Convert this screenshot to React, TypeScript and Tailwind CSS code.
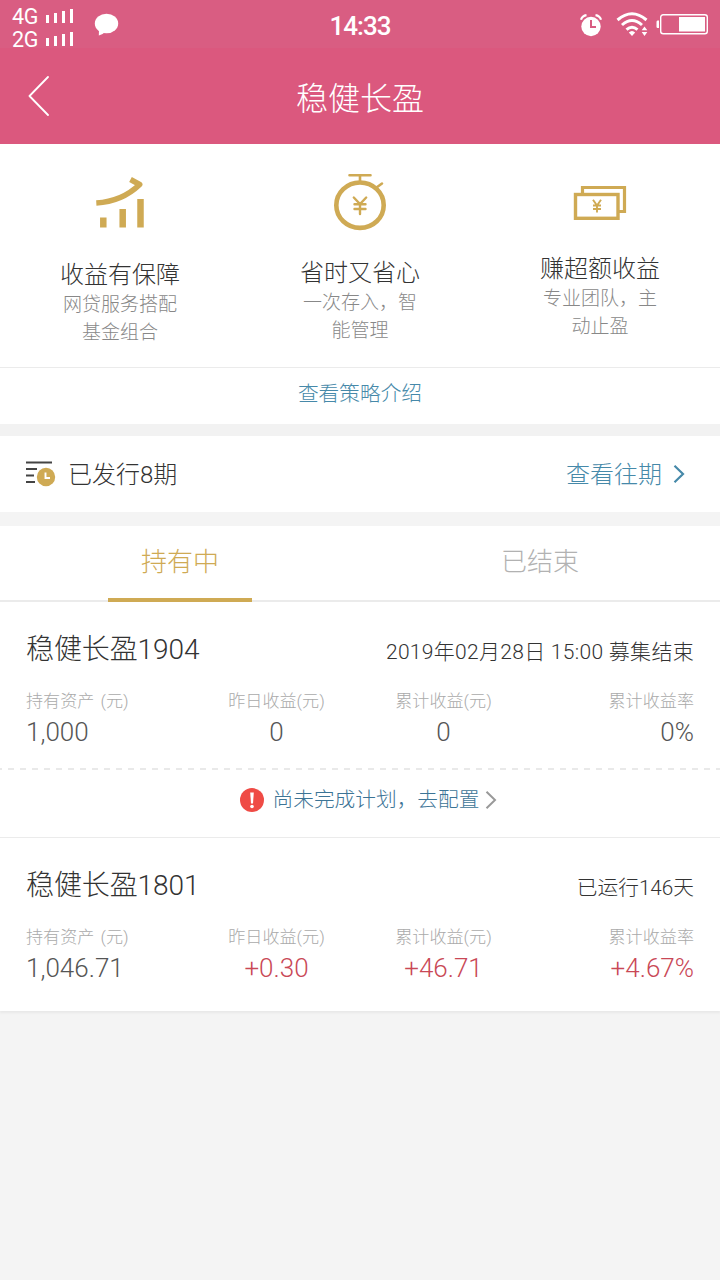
import type { ReactNode } from "react";

const GOLD = "#cfaa54";

interface Stat {
  label: string;
  value: string;
  up?: boolean;
}

const plan1904: Stat[] = [
  { label: "持有资产 (元)", value: "1,000" },
  { label: "昨日收益(元)", value: "0" },
  { label: "累计收益(元)", value: "0" },
  { label: "累计收益率", value: "0%" },
];

const plan1801: Stat[] = [
  { label: "持有资产 (元)", value: "1,046.71" },
  { label: "昨日收益(元)", value: "+0.30", up: true },
  { label: "累计收益(元)", value: "+46.71", up: true },
  { label: "累计收益率", value: "+4.67%", up: true },
];

const statAlign = ["text-left", "text-center", "text-center", "text-right"];

function Signal({ name }: { name: string }) {
  return (
    <div className="flex h-[23px] items-center">
      <span className="w-[34px] pt-px text-[21.5px] leading-[23px] tracking-[-0.4px]">{name}</span>
      <svg width="28" height="14" viewBox="0 0 28 14" fill="#fff">
        <rect x="0" y="6" width="3" height="8" />
        <rect x="8" y="4" width="3" height="10" />
        <rect x="16" y="2" width="3" height="12" />
        <rect x="24" y="0" width="3" height="14" />
      </svg>
    </div>
  );
}

function StatusBar() {
  return (
    <div className="grid h-12 grid-cols-3 items-start bg-[#d95d82] text-white">
      <div className="flex items-start pl-3">
        <div className="flex flex-col pt-1">
          <Signal name="4G" />
          <Signal name="2G" />
        </div>
        <svg className="ml-5 mt-[13px]" width="25" height="24" viewBox="0 0 25 24" fill="#fff">
          <ellipse cx="12.5" cy="10.500" rx="11.7" ry="9.8" />
          <path d="M5 16.500 L4.800 22.500 Q9 21.500 11.500 18.500 Z" />
        </svg>
      </div>
      <div className="pt-1.5 text-center text-[26px] font-medium leading-10 tracking-[-1px]">14:33</div>
      <div className="flex items-center justify-end pr-3 pt-3">
        <svg width="22" height="24" viewBox="0 0 22 24" fill="none">
          <circle cx="11" cy="13.500" r="9.700" fill="#fff" />
          <path d="M1 6.700 Q2.200 2.700 6.500 2.100 M15.500 2.100 Q19.800 2.700 21 6.700" stroke="#fff" strokeWidth="2.200" />
          <path d="M11 7 V14 H16" stroke="#d95d82" strokeWidth="2" />
        </svg>
        <svg className="ml-3.5" width="33" height="25" viewBox="0 0 33 25" fill="none" stroke="#fff" strokeWidth="3">
          <path d="M1.500 8 Q16 -4.500 30.500 8" />
          <path d="M6 13 Q16 4 26 13" />
          <path d="M10.500 17.600 Q16 13 21.500 17.600" />
          <path d="M12.800 20.500 Q16 17.500 19.200 20.500 L16 24 Z" fill="#fff" stroke="none" />
          <path d="M28.500 14.500 L31.300 18.300 H25.700 Z M28.500 24 L31.300 20 H25.700 Z" fill="#fff" stroke="none" />
        </svg>
        <svg className="ml-[7px]" width="52" height="21" viewBox="0 0 52 21" fill="none">
          <path d="M3 6.500 H1.500 Q0.500 6.500 0.500 8 V12.500 Q0.500 14 1.500 14 H3 Z" fill="#fff" />
          <rect x="4.700" y="0.700" width="46.600" height="19" rx="2.500" stroke="#fff" strokeWidth="1.400" />
          <rect x="23" y="3" width="26" height="14.500" fill="#fff" />
        </svg>
      </div>
    </div>
  );
}

function NavBar() {
  return (
    <div className="flex h-24 items-center bg-[#db587e] text-white">
      <div className="w-[120px] pl-7">
        <svg width="22" height="40" viewBox="0 0 22 40" fill="none" stroke="#fff" strokeWidth="1.800" strokeLinecap="round" strokeLinejoin="round">
          <path d="M20 1 L1.500 20 L20 39" />
        </svg>
      </div>
      <h1 className="flex-1 pt-[5px] text-center text-[32px] font-light leading-10">稳健长盈</h1>
      <div className="w-[120px]" />
    </div>
  );
}

function Feature({ icon, title, children, iconBox }: { icon: ReactNode; title: string; children: ReactNode; iconBox: string }) {
  return (
    <div className="flex flex-col items-center">
      <div className={iconBox}>{icon}</div>
      <h2 className="text-2xl font-light leading-8 text-[#333]">{title}</h2>
      <p className="w-[120px] text-center text-[19px] font-light leading-7 text-[#888]">{children}</p>
    </div>
  );
}

function GrowthIcon() {
  return (
    <svg width="60" height="64" viewBox="90 168 60 64" fill="none" stroke={GOLD}>
      <path d="M96.300 203 Q122 201.500 139.700 184.500 L130.500 179.500" strokeWidth="5.500" strokeLinejoin="round" />
      <path d="M103.300 217.500 V227.500 M122.700 209 V227.500 M140.500 199 V227.500" strokeWidth="6.500" />
    </svg>
  );
}

function TimerIcon() {
  return (
    <svg width="60" height="64" viewBox="330 168 60 64" fill="none" stroke={GOLD} strokeLinecap="round">
      <ellipse cx="360" cy="205.200" rx="23.700" ry="22.700" strokeWidth="4.600" />
      <path d="M349.500 175.200 H370.500 M360 175.500 V182 M376.500 187.500 L382 183.500" strokeWidth="2.600" />
      <path d="M353.800 197.500 L360 204 L366.200 197.500 M360 204 V214 M354.500 204.300 H365.500 M354.500 209 H365.500" strokeWidth="2.400" />
    </svg>
  );
}

function CashIcon() {
  return (
    <svg width="60" height="64" viewBox="570 168 60 64" fill="none" stroke={GOLD}>
      <path d="M582.500 193 V187.500 H624.500 V211.500 H619" strokeWidth="3.200" />
      <rect x="575.500" y="194.500" width="42.500" height="23.800" strokeWidth="3.400" />
      <path d="M593 199.800 L597 205.500 L601 199.800 M597 205 V212.500 M593 205.500 H601 M593 209 H601" strokeWidth="1.900" />
    </svg>
  );
}

function Chevron({ color, width }: { color: string; width: number }) {
  return (
    <svg width="12" height="20" viewBox="0 0 12 20" fill="none" stroke={color} strokeWidth={width}>
      <path d="M1.500 1.800 L10 10 L1.500 18.200" />
    </svg>
  );
}

function PlanCard({ name, note, noteClass, stats }: { name: string; note: string; noteClass: string; stats: Stat[] }) {
  return (
    <div className="px-[26px] pt-[27px]">
      <div className="flex h-10 items-center justify-between text-[#333]">
        <h3 className="pt-0.5 text-[28px] font-light leading-10 tracking-[-0.1px]">{name}</h3>
        <span className={`pt-[5px] font-light leading-9 ${noteClass}`}>{note}</span>
      </div>
      <div className="mt-[18px] grid grid-cols-4">
        {stats.map((s, i) => (
          <div key={s.label} className={statAlign[i]}>
            <div className="text-[17.1px] font-light leading-7 text-[#aaa] [word-spacing:2px]">{s.label}</div>
            <div className={`-mt-px text-[26px] font-light leading-9 ${s.up ? "text-[#c94856]" : "text-[#555]"}`}>{s.value}</div>
          </div>
        ))}
      </div>
    </div>
  );
}

export default function App() {
  return (
    <div className="min-h-screen w-[720px] bg-[#f4f4f4] font-[Roboto,'Noto_Sans_CJK_SC',sans-serif]">
      <StatusBar />
      <NavBar />

      <section className="bg-white">
        <div className="grid h-[223px] grid-cols-3 pt-6">
          <Feature icon={<GrowthIcon />} title="收益有保障" iconBox="h-[91px]">网贷服务搭配基金组合</Feature>
          <Feature icon={<TimerIcon />} title="省时又省心" iconBox="h-[89px]">一次存入，智能管理</Feature>
          <Feature icon={<CashIcon />} title="赚超额收益" iconBox="h-[85px]">专业团队，主动止盈</Feature>
        </div>
        <div className="h-[57px] border-t border-[#ebebeb] text-center text-[20.7px] font-light leading-[52px] text-[#4689a9]">
          查看策略介绍
        </div>
      </section>

      <section className="mt-3 flex h-[76px] items-center bg-white pl-[26px] pr-[35px] shadow-[0_-12px_0_#f2f2f2]">
        <svg width="30" height="28" viewBox="0 0 30 28" fill="none">
          <path d="M0 2.500 H26 M0 9 H11 M0 15.500 H8 M0 22 H9" stroke="#444" strokeWidth="1.800" />
          <circle cx="20" cy="17" r="9.200" fill={GOLD} />
          <path d="M19.500 12.500 V18 H24" stroke="#fff" strokeWidth="1.900" />
        </svg>
        <span className="ml-3 pt-0.5 text-2xl font-light text-[#333]">已发行8期</span>
        <a className="ml-auto flex items-center gap-[11px] text-2xl font-light text-[#4689a9]">
          <span className="pt-0.5">查看往期</span>
          <Chevron color="#4689a9" width={2.2} />
        </a>
      </section>

      <section className="mt-3.5 bg-white">
        <div className="grid h-[76px] grid-cols-2 border-b-2 border-[#ebebeb] text-center text-[26px] font-light leading-[72px]">
          <div className="mx-auto h-[76px] w-36 border-b-4 border-[#cfaa54] text-[#cfaa54]">持有中</div>
          <div className="text-[#b2b2b2]">已结束</div>
        </div>

        <PlanCard name="稳健长盈1904" note="2019年02月28日 15:00 募集结束" noteClass="text-[21px] tracking-[0.3px]" stats={plan1904} />
        <svg className="mt-[18px] block" width="720" height="2">
          <path d="M-4 1 H720" stroke="#e9e9e9" strokeWidth="2" strokeDasharray="6 6" />
        </svg>
        <div className="flex h-[68px] items-center justify-center border-b border-[#ebebeb] pb-2 pl-[17px] text-[20.7px] font-light text-[#3c7496]">
          <svg className="mr-[9px]" width="24" height="24" viewBox="0 0 24 24">
            <circle cx="12" cy="12" r="12" fill="#ef4b45" />
            <path d="M10.200 4.500 H13.800 L13 15.500 H11 Z" fill="#fff" />
            <circle cx="12" cy="18.500" r="1.800" fill="#fff" />
          </svg>
          <span className="pt-0.5">尚未完成计划，去配置</span>
          <span className="ml-1.5">
            <Chevron color="#999" width={2} />
          </span>
        </div>

        <PlanCard name="稳健长盈1801" note="已运行146天" noteClass="text-[20.7px]" stats={plan1801} />
        <div className="h-[25px] shadow-[0_2px_2px_#e8e8e8]" />
      </section>
    </div>
  );
}
